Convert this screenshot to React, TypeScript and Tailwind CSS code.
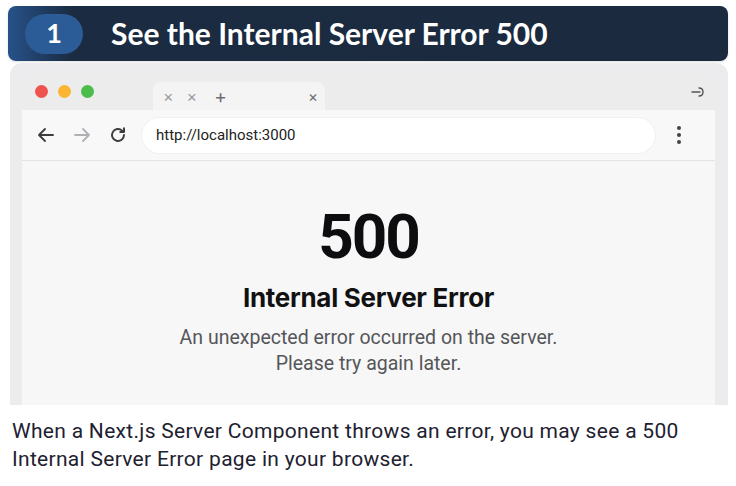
export default function App() {
  return (
    <div className="w-[736px] h-[486px] bg-white overflow-hidden font-['Inter',sans-serif]">
      {/* Step header */}
      <div className="mx-2 mt-[6px] h-[55px] rounded-lg flex items-center bg-linear-to-r from-[#26528a] from-0% via-[#1b2b41] via-[9%] to-[#1b2a3e] shadow-sm">
        <div className="ml-[17px] w-[58px] h-[40px] rounded-full bg-[#2c5c97] flex items-center justify-center text-white text-[27px] font-bold font-['Lato',sans-serif]">
          1
        </div>
        <h1 className="ml-[28px] text-white text-[30px] font-bold font-['Lato',sans-serif]">
          See the Internal Server Error 500
        </h1>
      </div>

      {/* Browser mock */}
      <div className="ml-[10px] w-[718px] mt-[2px] h-[342px] bg-[#ececee] rounded-t-xl pl-3 pr-[13px] pt-[10px]">
        <div className="h-full rounded-t-lg bg-[#f7f7f8] flex flex-col overflow-hidden">
          {/* Title bar */}
          <div className="h-[37px] bg-[#ececed] flex items-end relative shrink-0">
            <div className="flex gap-[10px] pl-[13px] self-center">
              <span className="w-[13px] h-[13px] rounded-full bg-[#ef5350]" />
              <span className="w-[13px] h-[13px] rounded-full bg-[#fbb532]" />
              <span className="w-[13px] h-[13px] rounded-full bg-[#4cbd4a]" />
            </div>
            <div className="ml-[59px] w-[172px] h-[28px] rounded-t-lg bg-[#f4f4f5] flex items-center text-[#9a9ca0]">
              <span className="ml-[10px] text-[16px] leading-none">×</span>
              <span className="ml-[13px] text-[16px] leading-none">×</span>
              <span className="ml-[17px] text-[19px] leading-none text-[#6b6d72]">+</span>
              <span className="ml-auto mr-[7px] text-[15px] leading-none text-[#6b6d72]">×</span>
            </div>
            <svg className="absolute right-[10px] top-[13px]" width="14" height="12" viewBox="0 0 14 12" fill="none" stroke="#555" strokeWidth="1.4" strokeLinecap="round">
              <path d="M1 6h8" />
              <path d="M8 2c3 0 4 2 4 4s-1 4-4 4" />
            </svg>
          </div>

          {/* Toolbar */}
          <div className="h-[51px] bg-[#f8f8f9] border-b border-[#e3e3e5] flex items-center shrink-0">
            <svg className="ml-[15px]" width="18" height="16" viewBox="0 0 18 16" fill="none" stroke="#3c3c3f" strokeWidth="1.8" strokeLinecap="round" strokeLinejoin="round">
              <path d="M16 8H2M8 2L2 8l6 6" />
            </svg>
            <svg className="ml-[18px]" width="18" height="16" viewBox="0 0 18 16" fill="none" stroke="#b0b1b5" strokeWidth="1.8" strokeLinecap="round" strokeLinejoin="round">
              <path d="M2 8h14M10 2l6 6-6 6" />
            </svg>
            <svg className="ml-[18px]" width="18" height="18" viewBox="0 0 24 24" fill="none" stroke="#3c3c3f" strokeWidth="2.6" strokeLinecap="round" strokeLinejoin="round">
              <path d="M20 12a8 8 0 1 1-2.5-5.8" />
              <path d="M20 3v5h-5" />
            </svg>
            <div className="ml-[15px] w-[513px] h-[35px] rounded-full bg-white flex items-center pl-[14px] text-[15px] text-[#222] font-['Roboto',sans-serif] shadow-[0_0_0_1px_#f0f0f2]">
              http://localhost:3000
            </div>
            <div className="ml-[22px] flex flex-col gap-[3px]">
              <span className="w-[4px] h-[4px] rounded-full bg-[#444]" />
              <span className="w-[4px] h-[4px] rounded-full bg-[#444]" />
              <span className="w-[4px] h-[4px] rounded-full bg-[#444]" />
            </div>
          </div>

          {/* Error page */}
          <div className="flex-1 flex flex-col items-center pt-[45px] text-center">
            <div className="text-[62px] leading-none font-bold text-[#0d0d0f] tracking-[-2px] font-['Roboto',sans-serif]">500</div>
            <div className="mt-[17px] text-[26px] leading-none font-bold text-[#111] tracking-[-0.3px]">Internal Server Error</div>
            <p className="mt-[14px] text-[19.5px] leading-[26px] text-[#555658] font-['Roboto',sans-serif]">
              An unexpected error occurred on the server.
              <br />
              Please try again later.
            </p>
          </div>
        </div>
      </div>

      {/* Caption */}
      <p className="mt-[12px] ml-[12px] text-[21px] leading-[28px] tracking-[0.3px] text-[#1d2130] font-['Roboto',sans-serif]">
        When a Next.js Server Component throws an error, you may see a 500
        <br />
        Internal Server Error page in your browser.
      </p>
    </div>
  )
}
